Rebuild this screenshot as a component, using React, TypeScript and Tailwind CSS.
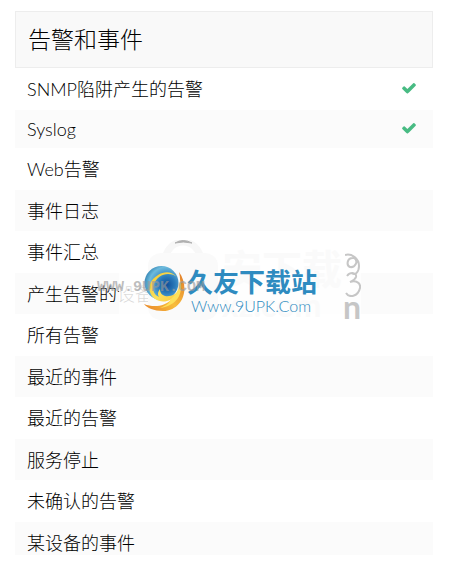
import React from 'react';

interface AlarmItem {
  name: string;
  rowClass: string;
  supported?: boolean;
}

const items: AlarmItem[] = [
  { name: 'SNMP陷阱产生的告警', rowClass: 'h-[42px] items-center', supported: true },
  { name: 'Syslog', rowClass: 'h-[38px] items-center bg-[#fbfbfb]', supported: true },
  { name: 'Web告警', rowClass: 'h-[42px] items-center' },
  { name: '事件日志', rowClass: 'h-[41px] items-center bg-[#fbfbfb]' },
  { name: '事件汇总', rowClass: 'h-[42px] items-center' },
  { name: '产生告警的设备', rowClass: 'h-[41px] items-center bg-[#fbfbfb]' },
  { name: '所有告警', rowClass: 'h-[42px] items-center' },
  { name: '最近的事件', rowClass: 'h-[41px] items-center bg-[#fbfbfb]' },
  { name: '最近的告警', rowClass: 'h-[42px] items-center' },
  { name: '服务停止', rowClass: 'h-[41px] items-center bg-[#fbfbfb]' },
  { name: '未确认的告警', rowClass: 'h-[42px] items-center' },
  { name: '某设备的事件', rowClass: 'h-[33px] items-end bg-[#fbfbfb]' },
];

const CheckIcon: React.FC = () => (
  <svg className="mr-1 mb-0.5 size-4 shrink-0 fill-[#48bb83]" viewBox="0 0 1792 1792" role="img" aria-label="支持">
    <path d="M1671 566q0 40-28 68l-724 724-136 136q-28 28-68 28t-68-28l-136-136-362-362q-28-28-28-68t28-68l136-136q28-28 68-28t68 28l294 295 656-657q28-28 68-28t68 28l136 136q28 28 28 68z" />
  </svg>
);

const GlobeLogo: React.FC = () => (
  <svg className="shrink-0" width="44" height="50" viewBox="0 0 44 50" aria-hidden="true">
    <defs>
      <radialGradient id="globe" cx="0.66" cy="0.55" r="0.7">
        <stop offset="0" stopColor="#0f4f98" />
        <stop offset="0.35" stopColor="#2a7bbb" />
        <stop offset="0.75" stopColor="#6dbbdd" />
        <stop offset="1" stopColor="#2f7fb0" />
      </radialGradient>
      <linearGradient id="swoosh" x1="0" y1="0" x2="1" y2="1">
        <stop offset="0" stopColor="#efc52f" />
        <stop offset="0.55" stopColor="#fde05a" />
        <stop offset="1" stopColor="#f7c840" />
      </linearGradient>
      <linearGradient id="tail" x1="0" y1="1" x2="1" y2="0">
        <stop offset="0" stopColor="#e8842a" />
        <stop offset="0.45" stopColor="#f8bd3c" />
        <stop offset="1" stopColor="#e07a2a" />
      </linearGradient>
    </defs>
    <circle cx="18.5" cy="19" r="17" fill="url(#globe)" />
    {/* inner crescent */}
    <path
      d="M34 13 C29 7 21 7 15 11 C8 15 5 22 7 28 C9 35 17 39 24 37 C31 35 35 32 36 26 C33 30 28 33 22 32 C19 31 17 29 17 25 C14 29 15 31 16 33 C11 31 9 26 11 20 C13 14 19 10 25 10 C29 10 32 11 34 13 Z"
      fill="url(#swoosh)"
    />
    {/* outer tail */}
    <path
      d="M36 8 C47 23 41 46 20 47 C11 47 4 44 1 40 C11 44 22 42 28 36 C36 29 39 20 36 8 Z"
      fill="url(#tail)"
    />
    <path d="M37 16 C41 29 34 42 17 44 C27 40 26 38 28 35 C34 30 36 25 37 16 Z" fill="#fde05a" />
  </svg>
);

// Faint shopping bag and download-site stamp lying under the blue logo
const FaintStamp: React.FC = () => (
  <div className="absolute top-[240px] left-[119px] flex h-[81px] w-[242px] items-end bg-white/85 pl-[29px]">
    <svg className="shrink-0" width="70" height="81" viewBox="0 0 70 81">
      <path d="M17 20 C20 -4 50 -4 53 20" fill="none" stroke="#f7f7f7" strokeWidth="7" />
      <path d="M27 3 Q35 -2 44 3 Q35 1 27 3 Z" fill="#b0b0b0" stroke="#b0b0b0" />
      <rect y="13" width="70" height="67" rx="13" fill="#fafafa" />
    </svg>
    <div className="flex-1 pl-1 font-bold whitespace-nowrap text-[#fafafa]">
      <div className="text-[40px] leading-10">安下载</div>
      <div className="text-[32px] leading-8">xz.com</div>
    </div>
    <div className="flex flex-col items-end pb-1">
      <svg width="16" height="46" viewBox="0 0 16 46" fill="none" stroke="#c6c6c6" strokeWidth="2">
        <path d="M0 4 C7 2 14 8 14 15 C14 21 10 25 7 22 M9 7 C2 6 1 14 5 16 C10 17 14 10 9 7" />
        <path d="M2 25 C5 21 12 21 11 26 C10 29 7 30 5 31 C11 29 16 32 15 37 C13 46 4 47 1 42" />
      </svg>
      <div className="text-[32px] leading-5 font-bold text-[#c6c6c6]">n</div>
    </div>
  </div>
);

const Watermark: React.FC = () => (
  <div className="pointer-events-none">
    <FaintStamp />
    <div className="absolute top-[264px] left-[143px] flex whitespace-nowrap text-[#2e8bc0]">
      <GlobeLogo />
      <div>
        <div className="text-[26px] leading-9 font-bold">久友下载站</div>
        <div className="pl-1 text-base leading-3">Www.9UPK.Com</div>
      </div>
    </div>
    <div className="absolute top-[280px] left-[97px] font-['Liberation_Mono',monospace] text-[15px] leading-4 font-bold text-[#999999]/65">
      WWW.9UPK.COM
    </div>
  </div>
);

const App: React.FC = () => {
  return (
    <div className="relative min-h-screen bg-white pt-[11px] pr-8 pb-6 pl-[15px] font-[Lato,'Noto_Sans_CJK_SC',sans-serif] font-light text-black">
      <section>
        <h2 className="border border-[#ededed] bg-[#f9f9f9] px-3 py-3 text-[23px] leading-[31px]">
          告警和事件
        </h2>
        <ul>
          {items.map((item) => (
            <li key={item.name} className={`flex justify-between px-3 text-lg leading-6 ${item.rowClass}`}>
              <span>{item.name}</span>
              {item.supported && <CheckIcon />}
            </li>
          ))}
        </ul>
      </section>
      <Watermark />
    </div>
  );
};

export default App;
